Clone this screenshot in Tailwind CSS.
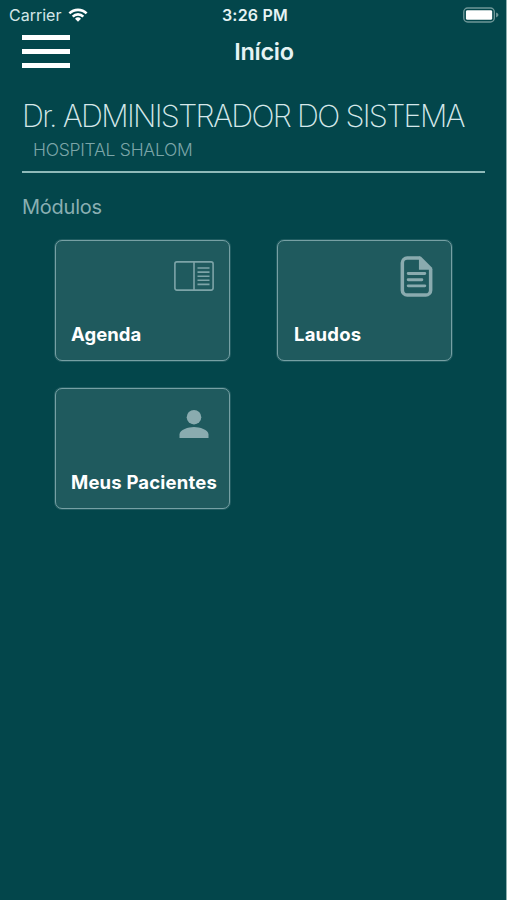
<!DOCTYPE html>
<html lang="pt-BR">
<head>
<meta charset="utf-8">
<title>Início</title>
<script src="https://cdn.jsdelivr.net/npm/@tailwindcss/browser@4"></script>
</head>
<body class="h-[900px] w-[507px] overflow-hidden border-r border-[#8fb0b0] bg-[#03464b] font-['Inter','Liberation_Sans',sans-serif] text-white">
<header class="h-[80px]">
  <div class="grid h-[30px] grid-cols-3 items-center pl-[9px] pr-[7px]">
    <div class="flex items-center gap-[7px]">
      <span class="text-[16px] text-[#d3e6e8]">Carrier</span>
      <svg class="h-[14px] w-[20px]" viewBox="0 0 20 14" fill="none" stroke="#fff" stroke-width="2.6"><path d="M1.4 5.4a12.2 12.2 0 0 1 17.2 0M4.7 8.6a7.5 7.5 0 0 1 10.6 0"/><path d="M7 10.7a4.3 4.3 0 0 1 6 0L10 13.7z" fill="#fff" stroke="none"/></svg>
    </div>
    <span class="pl-[2px] text-center text-[16px] font-semibold tracking-[0.2px] text-[#e6f3f4]">3:26 PM</span>
    <svg class="h-[16px] w-[36px] justify-self-end" viewBox="0 0 37 16"><rect x=".8" y=".8" width="31.4" height="14.4" rx="4" fill="none" stroke="#6f9798" stroke-width="1.4"/><rect x="3" y="3" width="27" height="10" rx="1.5" fill="#fff"/><path d="M34 5.5q2.500 1 2.500 2.500T34 10.500z" fill="#6f9798"/></svg>
  </div>
  <div class="relative flex h-[43px] items-center justify-center pl-[22px]">
    <div class="absolute left-[22px] top-[5px] flex w-[48px] flex-col gap-[9px]">
      <div class="h-[5px] bg-white"></div><div class="h-[5px] bg-white"></div><div class="h-[5px] bg-white"></div>
    </div>
    <h1 class="text-[23.5px] font-semibold tracking-[-0.3px] text-[#e6f3f4]">Início</h1>
  </div>
</header>
<main class="pl-[22px]">
  <section class="h-[93px] w-[463px] border-b-2 border-[#8fbab9] pt-[17px]">
    <h2 class="whitespace-nowrap text-[30.5px] font-extralight leading-[38px] tracking-[-1.67px] text-[#d5e8ea]">Dr. ADMINISTRADOR DO SISTEMA</h2>
    <p class="pl-[11px] text-[17.5px] font-light leading-[30px] tracking-[-0.25px] text-[#7ba5a8]">HOSPITAL SHALOM</p>
  </section>
  <h3 class="mt-[19px] text-[20px] leading-[30px] tracking-[-0.25px] text-[#8aafb2]">Módulos</h3>
  <div class="ml-[33px] mt-[18px] grid w-[397px] grid-cols-[175px_175px] gap-x-[47px] gap-y-[27px] text-[18.5px] font-bold">
    <div class="flex h-[121px] flex-col items-end justify-between rounded-[7px] border border-[#76a0a4] bg-[#1f5a5e] pb-[14px] pl-[15px] pr-[15px] pt-[20px] ring-1 ring-[#76a0a4]/25">
      <svg class="h-[30px] w-[40px]" viewBox="0 0 40 30" fill="none" stroke="#7da4a8" stroke-width="1.6"><rect x=".9" y=".9" width="38.200" height="28.200" rx="2"/><path d="M20 1v28M23.500 7h12M23.500 11.100h12M23.500 15.200h12M23.500 19.300h12M23.500 23.400h12"/></svg>
      <span class="self-start leading-[24px] tracking-[0.05px]">Agenda</span>
    </div>
    <div class="flex h-[121px] flex-col items-end justify-between rounded-[7px] border border-[#76a0a4] bg-[#1f5a5e] pb-[14px] pl-[16px] pr-[18px] pt-[15px] ring-1 ring-[#76a0a4]/25">
      <svg class="h-[41px] w-[33px]" viewBox="0 0 33 42" fill="none" stroke="#8aabaf"><path d="M20 2H7a5 5 0 0 0-5 5v28a5 5 0 0 0 5 5h19a5 5 0 0 0 5-5V13" stroke-width="3.600"/><path d="M19 .5h2L32.500 12v2H19z" fill="#8aabaf" stroke="none"/><path d="M8 18h17M8 24.300h14M8 30.600h17" stroke-width="3" stroke-linecap="round"/></svg>
      <span class="self-start leading-[24px] tracking-[0.2px]">Laudos</span>
    </div>
    <div class="flex h-[121px] flex-col items-end justify-between rounded-[7px] border border-[#76a0a4] bg-[#1f5a5e] pb-[14px] pl-[15px] pr-[20px] pt-[20px] ring-1 ring-[#76a0a4]/25">
      <svg class="h-[30px] w-[30px]" viewBox="0 0 30 30" fill="#8aabaf"><circle cx="15" cy="8.200" r="7.300"/><path d="M.5 29v-3.500C.5 20.700 9.500 18 15 18s14.500 2.700 14.500 7.500V29z"/></svg>
      <span class="self-start whitespace-nowrap leading-[24px] tracking-[0.18px]">Meus Pacientes</span>
    </div>
  </div>
</main>
</body>
</html>
